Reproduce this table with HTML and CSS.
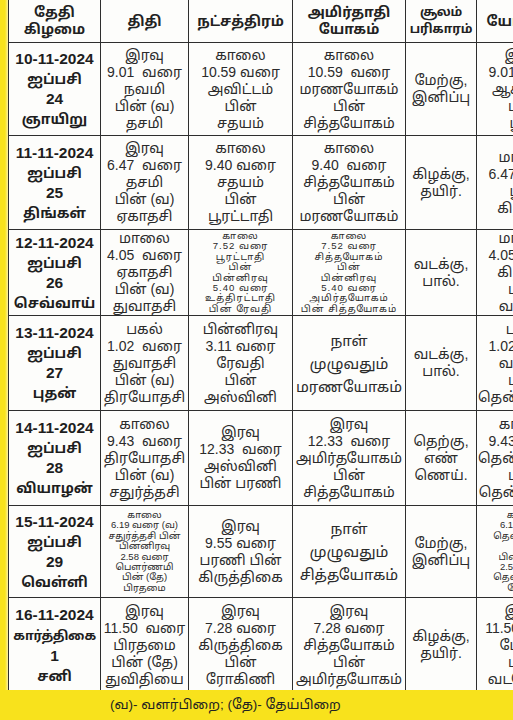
FILE: index.html
```html
<!DOCTYPE html>
<html lang="ta">
<head>
<meta charset="utf-8">
<link rel="stylesheet" href="styles.css">
</head>
<body>
<div class="page">
  <div class="frame">
    <table class="cal">
      <colgroup>
        <col class="c-date"><col class="c-thithi"><col class="c-star"><col class="c-yoga"><col class="c-soolam"><col class="c-last">
      </colgroup>
      <thead>
        <tr class="head">
          <th>தேதி<br>கிழமை</th>
          <th>திதி</th>
          <th>நட்சத்திரம்</th>
          <th>அமிர்தாதி<br>யோகம்</th>
          <th class="soolam-h">சூலம்<br>பரிகாரம்</th>
          <th class="last-h">யோகினி</th>
        </tr>
      </thead>
      <tbody>
        <tr class="r1">
          <td class="date"><span class="num">10-11-2024</span><br>ஐப்பசி<br><span class="num">24</span><br>ஞாயிறு</td>
          <td>இரவு<br>9.01&nbsp; வரை<br>நவமி<br>பின் (வ)<br>தசமி</td>
          <td>காலை<br>10.59 வரை<br>அவிட்டம்<br>பின்<br>சதயம்</td>
          <td>காலை<br>10.59&nbsp; வரை<br>மரணயோகம்<br>பின்<br>சித்தயோகம்</td>
          <td>மேற்கு,<br>இனிப்பு</td>
          <td class="last">இரவு<br>9.01 வரை<br>ஆகாயம்<br>பின்<br>பூமி</td>
        </tr>
        <tr class="r2">
          <td class="date"><span class="num">11-11-2024</span><br>ஐப்பசி<br><span class="num">25</span><br>திங்கள்</td>
          <td>இரவு<br>6.47&nbsp; வரை<br>தசமி<br>பின் (வ)<br>ஏகாதசி</td>
          <td>காலை<br>9.40 வரை<br>சதயம்<br>பின்<br>பூரட்டாதி</td>
          <td>காலை<br>9.40&nbsp; வரை<br>சித்தயோகம்<br>பின்<br>மரணயோகம்</td>
          <td>கிழக்கு,<br>தயிர்.</td>
          <td class="last">மாலை<br>6.47 வரை<br>பூமி<br>கிழக்கு</td>
        </tr>
        <tr class="r3">
          <td class="date"><span class="num">12-11-2024</span><br>ஐப்பசி<br><span class="num">26</span><br>செவ்வாய்</td>
          <td>மாலை<br>4.05&nbsp; வரை<br>ஏகாதசி<br>பின் (வ)<br>துவாதசி</td>
          <td class="tiny wide">காலை<br>7.52 வரை<br>பூரட்டாதி<br>பின்<br>பின்னிரவு<br>5.40 வரை<br>உத்திரட்டாதி<br>பின் ரேவதி</td>
          <td class="tiny wide">காலை<br>7.52 வரை<br>சித்தயோகம்<br>பின்<br>பின்னிரவு<br>5.40 வரை<br>அமிர்தயோகம்<br>பின் சித்தயோகம்</td>
          <td>வடக்கு,<br>பால்.</td>
          <td class="last">மாலை<br>4.05 வரை<br>கிழக்கு<br>பின்<br>வடக்கு</td>
        </tr>
        <tr class="r4">
          <td class="date"><span class="num">13-11-2024</span><br>ஐப்பசி<br><span class="num">27</span><br>புதன்</td>
          <td>பகல்<br>1.02&nbsp; வரை<br>துவாதசி<br>பின் (வ)<br>திரயோதசி</td>
          <td>பின்னிரவு<br>3.11 வரை<br>ரேவதி<br>பின்<br>அஸ்வினி</td>
          <td class="big">நாள்<br>முழுவதும்<br>மரணயோகம்</td>
          <td>வடக்கு,<br>பால்.</td>
          <td class="last">பகல்<br>1.02 வரை<br>வடக்கு<br>பின்<br>தென்கிழக்கு</td>
        </tr>
        <tr class="r5">
          <td class="date"><span class="num">14-11-2024</span><br>ஐப்பசி<br><span class="num">28</span><br>வியாழன்</td>
          <td>காலை<br>9.43&nbsp; வரை<br>திரயோதசி<br>பின் (வ)<br>சதுர்த்தசி</td>
          <td>இரவு<br>12.33&nbsp; வரை<br>அஸ்வினி<br>பின் பரணி</td>
          <td>இரவு<br>12.33&nbsp; வரை<br>அமிர்தயோகம்<br>பின்<br>சித்தயோகம்</td>
          <td>தெற்கு,<br>எண்<br>ணெய்.</td>
          <td class="last">காலை<br>9.43 வரை<br>தென்கிழக்கு<br>பின்<br>தென்மேற்கு</td>
        </tr>
        <tr class="r6">
          <td class="date"><span class="num">15-11-2024</span><br>ஐப்பசி<br><span class="num">29</span><br>வெள்ளி</td>
          <td class="tiny">காலை<br>6.19 வரை (வ)<br>சதுர்த்தசி பின்<br>பின்னிரவு<br>2.58 வரை<br>பௌர்ணமி<br>பின் (தே)<br>பிரதமை</td>
          <td>இரவு<br>9.55 வரை<br>பரணி பின்<br>கிருத்திகை</td>
          <td class="big">நாள்<br>முழுவதும்<br>சித்தயோகம்</td>
          <td>மேற்கு,<br>இனிப்பு</td>
          <td class="last tiny">காலை<br>6.19 வரை<br>தென்மேற்கு<br>பின்<br>பின்னிரவு<br>2.58 வரை<br>தென்மேற்கு<br>மேற்கு</td>
        </tr>
        <tr class="r7">
          <td class="date"><span class="num">16-11-2024</span><br><span class="narrow">கார்த்திகை</span><br><span class="num">1</span><br>சனி</td>
          <td>இரவு<br>11.50&nbsp; வரை<br>பிரதமை<br>பின் (தே)<br>துவிதியை</td>
          <td>இரவு<br>7.28 வரை<br>கிருத்திகை<br>பின்<br>ரோகிணி</td>
          <td>இரவு<br>7.28 வரை<br>சித்தயோகம்<br>பின்<br>அமிர்தயோகம்</td>
          <td>கிழக்கு,<br>தயிர்.</td>
          <td class="last">இரவு<br>11.50 வரை<br>மேற்கு<br>பின்<br>வடமேற்கு</td>
        </tr>
      </tbody>
    </table>
  </div>
  <div class="note">(வ)- வளர்பிறை; (தே)- தேய்பிறை</div>
</div>
</body>
</html>
```
FILE: styles.css
```css
html, body {
  margin: 0;
  padding: 0;
}
body {
  width: 513px;
  height: 720px;
  overflow: hidden;
  background: #f8e21c;
  font-family: "Liberation Sans", "Noto Sans Tamil", "Noto Sans Tamil UI", "Lohit Tamil", "Noto Serif Tamil", "FreeSans", "FreeSerif", "Latha", "Nirmala UI", sans-serif;
  color: #2b2b2b;
}
.page {
  display: flex;
  flex-direction: column;
  height: 720px;
}
.frame {
  padding-left: 8px;
  background: linear-gradient(to right, #f8e21c 0, #f8e21c 5px, #fbf0a0 8px);
  overflow: hidden;
  height: 690px;
}
.cal {
  border-collapse: collapse;
  table-layout: fixed;
  width: 563px;
  background: #fdfdfb;
}
.c-date { width: 92px; }
.c-thithi { width: 88px; }
.c-star { width: 104px; }
.c-yoga { width: 113px; }
.c-soolam { width: 71px; }
.c-last { width: 95px; }
.cal th, .cal td {
  border: 1.5px solid #2e2e2e;
  text-align: center;
  vertical-align: middle;
  padding: 0 1px;
  overflow: hidden;
  white-space: nowrap;
}
.cal th {
  border-top: none;
  height: 42px;
  font-size: 14px;
  font-weight: bold;
  line-height: 17px;
  color: #222;
}
.cal th.soolam-h {
  font-size: 12.5px;
  letter-spacing: -0.2px;
}
.cal td {
  font-size: 14px;
  line-height: 17px;
}
.cal td.date {
  font-weight: bold;
  font-size: 14px;
  line-height: 20px;
  color: #1e1e1e;
}
.cal td.date .num {
  font-size: 15.5px;
}
.cal td.date .narrow {
  font-size: 12.8px;
  letter-spacing: -0.4px;
}
.cal td.tiny {
  font-size: 9.5px;
  line-height: 10.4px;
}
.cal td.tiny.wide {
  font-size: 9.6px;
  letter-spacing: 1px;
  line-height: 10.4px;
}
.cal td.big {
  font-size: 15px;
  line-height: 23px;
}
.r1 td { height: 92px; }
.r2 td { height: 93px; }
.r3 td { height: 83px; }
.r4 td { height: 94px; }
.r5 td { height: 94px; }
.r6 td { height: 91px; }
.r7 td { height: 94px; }
.note {
  flex: 1;
  display: flex;
  align-items: center;
  padding-left: 110px;
  font-size: 13.5px;
  color: #222;
}
```
